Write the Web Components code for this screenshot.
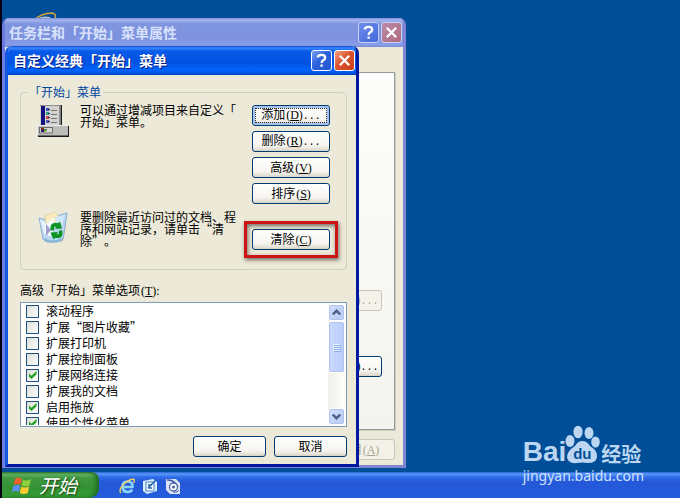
<!DOCTYPE html>
<html lang="zh-CN">
<head>
<meta charset="utf-8">
<title>自定义经典「开始」菜单</title>
<style>
  html, body { height: 100%; }
  body {
    margin: 0; overflow: hidden; color: #000;
    font: 12px/16px "Noto Sans CJK SC", sans-serif;
    text-spacing-trim: space-all;
  }
</style>
</head>
<body>
<xp-desktop>
  <xp-window slot="back" inactive heading="任务栏和「开始」菜单属性">
    <xp-tab-page>
      <xp-button disabled>自定义<m-key more>(C)</m-key></xp-button>
      <xp-button>自定义<m-key more>(C)</m-key></xp-button>
    </xp-tab-page>
    <xp-actions><xp-button disabled>应用<m-key>(<u>A</u>)</m-key></xp-button></xp-actions>
  </xp-window>

  <xp-window slot="front" heading="自定义经典「开始」菜单">
    <xp-start-group></xp-start-group>
    <xp-listbox>
      <span slot="label">高级「开始」菜单选项<m-key>(<u>T</u>):</m-key></span>
      <xp-check>滚动程序</xp-check>
      <xp-check>扩展“图片收藏”</xp-check>
      <xp-check>扩展打印机</xp-check>
      <xp-check>扩展控制面板</xp-check>
      <xp-check checked>扩展网络连接</xp-check>
      <xp-check>扩展我的文档</xp-check>
      <xp-check checked>启用拖放</xp-check>
      <xp-check checked>使用个性化菜单</xp-check>
    </xp-listbox>
    <xp-actions><xp-button>确定</xp-button><xp-button>取消</xp-button></xp-actions>
  </xp-window>

  <xp-taskbar slot="bar"></xp-taskbar>
  <baidu-mark slot="mark"></baidu-mark>
</xp-desktop>

<script>
const define = (name, html, setup) => {
  const t = document.createElement('template');
  t.innerHTML = html;
  customElements.define(name, class extends HTMLElement {
    constructor() {
      super();
      this.attachShadow({ mode: 'open' }).append(t.content.cloneNode(true));
      if (setup) setup(this, this.shadowRoot);
    }
  });
};

/* Access key after a label; "more" adds the ellipsis of a button that opens a dialog. */
define('m-key', `<style>:host{display:inline; margin-left:1px; font: 12px/12px "Liberation Serif", serif}
  span{font: 10px/12px "Liberation Mono", monospace} :host(:not([more])) span{display:none}</style><slot></slot><span>...</span>`);

define('xp-desktop', `
<style>
  :host { display: flex; flex-direction: column; height: 100vh; position: relative; box-sizing: border-box;
    border-left: 2px solid #000010; background: #004e98; overflow: hidden; }
  .space { flex: 1; position: relative; min-height: 0; }
  .shortcut { position: absolute; left: 30px; top: 12px; width: 26px; height: 12px; }
  ::slotted([slot=back]) { position: absolute; left: 0; top: 18px; width: min(404px, 100vw - 8px); }
  ::slotted([slot=front]) { position: absolute; left: 3px; top: 46px; width: min(354px, 100vw - 14px); }
  ::slotted([slot=mark]) { position: absolute; right: 36px; bottom: 13px; }
</style>
<div class="space">
  <svg class="shortcut" viewBox="0 0 26 12" aria-hidden="true">
    <path d="M2 8Q10 1 20 1Q26 2 22 8" fill="none" stroke="#d6a33c" stroke-width="1.5"/>
    <path d="M3 8Q10 3 18 5L20 8Z" fill="#b9c1c4"/>
  </svg>
  <slot name="back"></slot><slot name="front"></slot>
</div>
<slot name="bar"></slot><slot name="mark"></slot>`);

define('xp-window', `
<style>
  :host { display: flex; flex-direction: column; box-sizing: border-box; border-radius: 7px 7px 0 0; overflow: hidden;
    background: #ece9d8; border: solid; border-width: 0 3px 3px; border-color: #0019a0 #0019a0 #0019a0 #1257e0; }
  :host([inactive]) { border-color: #8084d2 #8084d2 #8084d2 #6b7de2; }
  header { flex: none; box-sizing: border-box; display: flex; align-items: center; gap: 2px; height: 29px; padding: 0 2px 0 6px; margin: 0 -1px;
    background: linear-gradient(#0a48c8 0, #3a8bff 2px, #0a5ae8 5px, #0052e0 16px, #0064fc 24px, #0055e6 27px, #003dc4 29px); }
  :host([inactive]) header { padding-left: 5px;
    background: linear-gradient(#7c90dc 0, #a4b4ee 2px, #7f95df 6px, #7d92df 20px, #8a9de8 27px, #7389d8 29px); }
  h1 { flex: 1; margin: 0; padding-bottom: 2px; font-size: 14px; line-height: 20px; font-weight: 700; color: #fff; white-space: nowrap;
    text-shadow: 1px 1px 0 #0a1f86; }
  :host([inactive]) h1 { color: #d9e2fb; text-shadow: none; }
  header button { width: 21px; height: 21px; padding: 0; border: 1px solid #fff; border-radius: 3px; display: grid; place-items: center;
    background: linear-gradient(135deg, #7ba0f4, #2b60dc 45%, #2458d2); }
  header .x { background: linear-gradient(135deg, #f0a083, #dc5530 45%, #c8401a); }
  :host([inactive]) header button { border-color: #c8d2f6; background: linear-gradient(135deg, #6e8cea, #4468dc); }
  :host([inactive]) header .x { background: linear-gradient(135deg, #b98ba8, #b06a80); }
  svg { width: 17px; height: 17px; fill: none; stroke: #fff; stroke-width: 2.3; }
  main { flex: 1; display: flex; flex-direction: column; padding: 9px 9px 7px 12px; }
  :host([inactive]) main { padding: 25px 8px 5px 8px; }
</style>
<header>
  <h1></h1>
  <button type="button" aria-label="帮助"><svg viewBox="0 0 17 17"><path d="M4.8 5.6Q4.8 2.8 8.5 2.8Q12.2 2.8 12.2 5.6Q12.2 7.2 10.2 8.3Q8.6 9.2 8.6 10.9M8.6 12.4V14.8"/></svg></button>
  <button type="button" class="x" aria-label="关闭"><svg viewBox="0 0 17 17"><path d="M3.8 3.8L13.2 13.2M13.2 3.8L3.8 13.2"/></svg></button>
</header>
<main><slot></slot></main>`, (host, root) => {
  root.querySelector('h1').textContent = host.getAttribute('heading');
});

define('xp-button', `
<style>
  :host { display: block; width: 78px; }
  button { display: block; box-sizing: border-box; width: 100%; height: 21px; padding: 0 0 2px; white-space: nowrap;
    font: inherit; line-height: 16px; color: inherit; border: 1px solid #003c74; border-radius: 3px;
    background: linear-gradient(#fff, #f6f5f0 70%, #e4e1d6 90%, #d6d0c5); }
  :host([default]) button { outline: 1px dotted #222; outline-offset: -4px; box-shadow: inset 0 0 0 2px #a8c2f0; }
  button:disabled { color: #a5a393; border-color: #c9c7ba; background: #f4f2e8; }
</style>
<button type="button"><slot></slot></button>`, (host, root) => {
  root.querySelector('button').disabled = host.hasAttribute('disabled');
});

define('xp-tab-page', `
<style>
  :host { display: flex; flex-direction: column; align-items: flex-end; justify-content: flex-end; gap: 45px;
    box-sizing: border-box; height: 358px; padding: 0 12px 52px; border: 1px solid #919b9c;
    background: linear-gradient(#fdfdfc, #f4f3ee); box-shadow: 1px 1px 0 #d0cebf; }
</style><slot></slot>`);

define('xp-actions', `
<style>
  :host { display: flex; justify-content: flex-end; gap: 8px; margin-top: 9px; }
  ::slotted(xp-button) { width: 73px; }
</style><slot></slot>`);

define('xp-start-group', `
<style>
  :host { display: block; }
  fieldset { margin: 0; min-width: 0; padding: 5px 6px 19px; border: 1px solid #d0d0bf; border-radius: 4px; }
  legend { padding: 0 2px; color: #0046a0; line-height: 16px; height: 16px; }
  .grid { display: grid; grid-template-columns: 32px 1fr 78px; gap: 8px 11px; padding: 0 10px; }
  p { margin: -1px 0 0; line-height: 12px; white-space: nowrap; }
  .stack { display: flex; flex-direction: column; gap: 5px; }
  svg { width: 32px; height: 32px; }
  .mark { position: relative; align-self: end; margin-top: 17px; }
  .mark::after { content: ""; position: absolute; inset: -8px; border: 3px solid #cc1414; pointer-events: none;
    box-shadow: 1px 2px 4px #0008, inset 1px 2px 4px #0008; }
</style>
<fieldset>
  <legend>「开始」菜单</legend>
  <div class="grid">
    <svg viewBox="0 0 32 32" aria-hidden="true">
      <path d="M3 0H25V21H32V32H1V20H3Z" fill="#181818"/>
      <path d="M3 0H23.500V20H3Z" fill="#d2d2d0"/><path d="M4 1H8V20H4Z" fill="#14147c"/>
      <path d="M22 1V20H23.500V0H3V1Z" fill="#8e8e8c"/>
      <g stroke="#77776f"><path d="M14 5.500H20M14 9.500H20M14 13.500H20M14 17.500H20"/></g>
      <path d="M9 3h3v3H9z" fill="#3854c0"/><path d="M9 7h3v3H9z" fill="#38a080"/><path d="M9 11h3v3H9z" fill="#d05048"/><path d="M9 15h3v3H9z" fill="#4858b0"/>
      <path d="M11 4h2v1h-2zM11 8h2v1h-2zM11 12h2v1h-2zM11 16h2v1h-2z" fill="#2a2a5a"/>
      <path d="M0 20H31V30.500H0Z" fill="#bdbdbb"/><path d="M0 20.500H31M.5 20V30" stroke="#ececea"/>
      <path d="M2 22H16V28.500H2Z" fill="#6e6e6c"/><path d="M3 23H15V27.500H3Z" fill="#d6d6d4"/>
      <path d="M4 23h3v2H4z" fill="#7a2828"/><path d="M7 24h3v1.500H7z" fill="#338040"/><path d="M4 25h3v2H4z" fill="#202080"/><path d="M7 25.500h2v1.500H7z" fill="#a09020"/>
    </svg>
    <p>可以通过增减项目来自定义「<br>开始」菜单。</p>
    <div class="stack">
      <xp-button default>添加<m-key more>(<u>D</u>)</m-key></xp-button>
      <xp-button>删除<m-key more>(<u>R</u>)</m-key></xp-button>
      <xp-button>高级<m-key>(<u>V</u>)</m-key></xp-button>
      <xp-button>排序<m-key>(<u>S</u>)</m-key></xp-button>
    </div>
    <svg viewBox="0 0 32 32" aria-hidden="true">
      <path d="M6 29Q12 33 24 30L30 4L26 29Q17 33 8 30Z" fill="#9b9c96" opacity=".7"/>
      <path d="M2 6Q10 9 16 5Q23 3 30 1L26.500 25Q25 30 18 30Q9 31 6 27Z" fill="#b8d6ee" stroke="#7fa6cc" stroke-width=".8"/>
      <path d="M8 4L18 0L22 5L20 10L9 12Z" fill="#fbeabb" stroke="#d9c48c" stroke-width=".5"/>
      <path d="M3 7L10 12L8 25Z" fill="#e8f4ff"/><path d="M10 11L16 6L18 15L13 25L7 20Z" fill="#f3f8fd"/>
      <path d="M9 12L14 18L9 24Z" fill="#a59fd0"/><path d="M18 5L28 3L25 12L19 12Z" fill="#d2e8f8"/>
      <path d="M7 26Q15 31 25 26L24 29Q15 32 8 29Z" fill="#86b4da"/>
      <path d="M13.500 18.500V15Q14 11 18 11H21.500L23 9.500L25 16.500L18 17L19.500 14.800H18Q17 15 17 18.500Z" fill="#0d9226"/>
      <path d="M25.500 18.500V22Q25 26 21 26H18L16.500 27.500L13.500 20.500L21 20L19.500 22.200H21Q22 22 22 18.500Z" fill="#0d9226"/>
    </svg>
    <p>要删除最近访问过的文档、程<br>序和网站记录，请单击“清<br>除”。</p>
    <div class="mark"><xp-button>清除<m-key>(<u>C</u>)</m-key></xp-button></div>
  </div>
</fieldset>`);

define('xp-check', `
<style>
  :host { display: block; }
  label { display: flex; align-items: center; gap: 7px; height: 16px; white-space: nowrap; }
  input { appearance: none; box-sizing: border-box; flex: none; width: 13px; height: 13px; margin: 0; display: grid; place-items: center;
    border: 1px solid #1c5180; background: linear-gradient(135deg, #dcdcd7, #fff); }
  input:checked::before { content: ""; width: 8px; height: 8px; background: #21a121;
    clip-path: polygon(0 25%, 38% 60%, 100% 0, 100% 40%, 38% 100%, 0 65%); }
</style>
<label><input type="checkbox"><span><slot></slot></span></label>`, (host, root) => {
  root.querySelector('input').checked = host.hasAttribute('checked');
});

define('xp-listbox', `
<style>
  :host { display: block; margin-top: 12px; }
  .cap { line-height: 16px; margin-bottom: 4px; }
  .box { display: flex; box-sizing: border-box; height: 125px; padding: 0 1px 1px; border: 1px solid #7f9db9; background: #fff; }
  .items { flex: 1; overflow: hidden; padding-left: 4px; }
  .bar { display: flex; flex-direction: column; width: 17px; margin-top: 1px; background: linear-gradient(90deg, #f0efe9, #fefefb); }
  button { display: grid; place-items: center; box-sizing: border-box; width: 17px; height: 17px; padding: 0;
    border: 1px solid #fff; border-radius: 3px; background: linear-gradient(135deg, #d3e0fe, #b6c9f6);
    box-shadow: inset 0 0 0 1px #b0c3ec; }
  .thumb { height: 52px; background: linear-gradient(90deg, #cbdafe, #b9cdfa); }
  .down { margin-top: auto; }
  svg { width: 9px; height: 9px; fill: none; stroke: #4d6185; stroke-width: 2.4; }
  .thumb svg { stroke: #eef4fe; stroke-width: 1; }
</style>
<div class="cap"><slot name="label"></slot></div>
<div class="box" role="group" aria-label="高级「开始」菜单选项">
  <div class="items"><slot></slot></div>
  <div class="bar">
    <button type="button" aria-label="向上"><svg viewBox="0 0 9 9"><path d="M.8 6.500L4.500 2.800L8.200 6.500"/></svg></button>
    <button type="button" class="thumb" aria-label="滚动"><svg viewBox="0 0 9 9"><path d="M1 1.500H8M1 3.500H8M1 5.500H8M1 7.500H8"/><path d="M2 2.500H9M2 4.500H9M2 6.500H9M2 8.500H9" stroke="#8caae6"/></svg></button>
    <button type="button" class="down" aria-label="向下"><svg viewBox="0 0 9 9"><path d="M.8 2.500L4.500 6.200L8.200 2.500"/></svg></button>
  </div>
</div>`);

define('xp-taskbar', `
<style>
  :host { display: flex; align-items: center; gap: 20px; height: 26px;
    background: linear-gradient(#2a62d8 0, #5a9af8 2px, #2f6ce8 5px, #2458d8 10px, #245cdc 100%); }
  .start { display: flex; align-items: center; gap: 7px; align-self: stretch; padding: 0 22px 0 10px; border: 0; border-radius: 0 8px 10px 0;
    color: #fff; font: italic 19px/26px "Noto Sans CJK SC", sans-serif; text-shadow: 1px 1px 2px #143c10;
    background: linear-gradient(#2f7a30 0, #6ab86a 2px, #3f9840 6px, #339233 16px, #37a037 100%);
    box-shadow: inset -3px 0 4px #1d6a20; }
  .start svg { width: 20px; height: 19px; }
  nav { display: flex; gap: 7px; padding-top: 2px; }
  a { display: block; height: 16px; } a svg { display: block; width: 16px; height: 16px; }
</style>
<button type="button" class="start">
  <svg viewBox="0 0 20 19" aria-hidden="true">
    <path d="M3 3Q6 0 10 3L8.500 9Q5 7 1.500 9Z" fill="#f0602c"/><path d="M11 3.500Q15 5.500 19 3L17.500 9.500Q14 11.500 9.500 9.500Z" fill="#8cd03c"/>
    <path d="M1.200 10Q5 8 8.200 10L6.800 16Q3.500 14 0 16Z" fill="#5a90f4"/><path d="M9.200 10.500Q13 12.500 17.200 10.500L15.800 17Q11.500 19 7.800 17Z" fill="#fccb30"/>
  </svg>开始</button>
<nav aria-label="快速启动">
  <a href="#ie" aria-label="Internet Explorer"><svg viewBox="0 0 16 16"><path d="M4 9H13.500Q14 3.500 8.500 3.500Q3.500 3.500 3.500 9Q4 14 8.500 14Q12 14 13 11.500" fill="none" stroke="#8ad4fb" stroke-width="2.6"/><path d="M2 15Q-1 12 5 6Q12 0 15 1.500Q16 2.500 14.500 5" fill="none" stroke="#f0cf62" stroke-width="1.4"/></svg></a>
  <a href="#desktop" aria-label="显示桌面"><svg viewBox="0 0 16 16"><path d="M1 3L11 1L15 4V13L5 16L1 13Z" fill="#d9edfb"/><path d="M4 4H12V13H4Z" fill="#fff" stroke="#3c80c4"/><path d="M6 10L14 2M6 7H10M6 10H10" stroke="#2468b4" stroke-width="1.600" fill="none"/></svg></a>
  <a href="#media" aria-label="媒体"><svg viewBox="0 0 16 16"><path d="M1 1H11L15 5V16H5L1 12Z" fill="#dce4f4"/><path d="M2 2Q9 1 13 9" fill="none" stroke="#3c50a0" stroke-width="1.500"/><circle cx="8.500" cy="9" r="4" fill="#fff" stroke="#4660ae" stroke-width="1.300"/><circle cx="8.500" cy="9" r="1.500" fill="#4660ae"/><path d="M8 14Q13 15 14 12" fill="none" stroke="#4660ae"/></svg></a>
</nav>`);

define('baidu-mark', `
<style>
  :host { display: block; color: #bcd6f2; }
  .logo { display: flex; align-items: flex-end; gap: 0; }
  .bai { font: 700 28px/30px "Liberation Sans", sans-serif; }
  .paw { position: relative; width: 36px; height: 40px; margin: 0 1px 3px -2px; }
  .paw svg { display: block; width: 36px; height: 40px; fill: currentColor; }
  .du { position: absolute; left: 0; right: 0; bottom: 2px; text-align: center; color: #004e98; font: 700 15px/16px "Liberation Sans", sans-serif; }
  .jy { font-size: 20px; line-height: 26px; font-weight: 700; }
  .url { font: 14px/18px "Noto Sans", sans-serif; color: #cfe2fa; }
</style>
<div class="logo">
  <span class="bai">Bai</span>
  <span class="paw"><svg viewBox="0 0 36 40" aria-hidden="true">
    <ellipse cx="6" cy="17" rx="4.500" ry="6"/><ellipse cx="14" cy="8" rx="4.600" ry="6.300"/><ellipse cx="25" cy="9" rx="4.500" ry="6"/><ellipse cx="31.500" cy="18" rx="4.300" ry="5.500"/>
    <path d="M18.500 17Q23 17 26 22Q34 27 33 33Q32 39 24 39Q18 38 13 39Q4 40 3 33Q3 27 11 22Q14 17 18.500 17Z"/></svg><span class="du">du</span></span>
  <span class="jy">经验</span>
</div>
<div class="url">jingyan.baidu.com</div>`);
</script>
</body>
</html>
